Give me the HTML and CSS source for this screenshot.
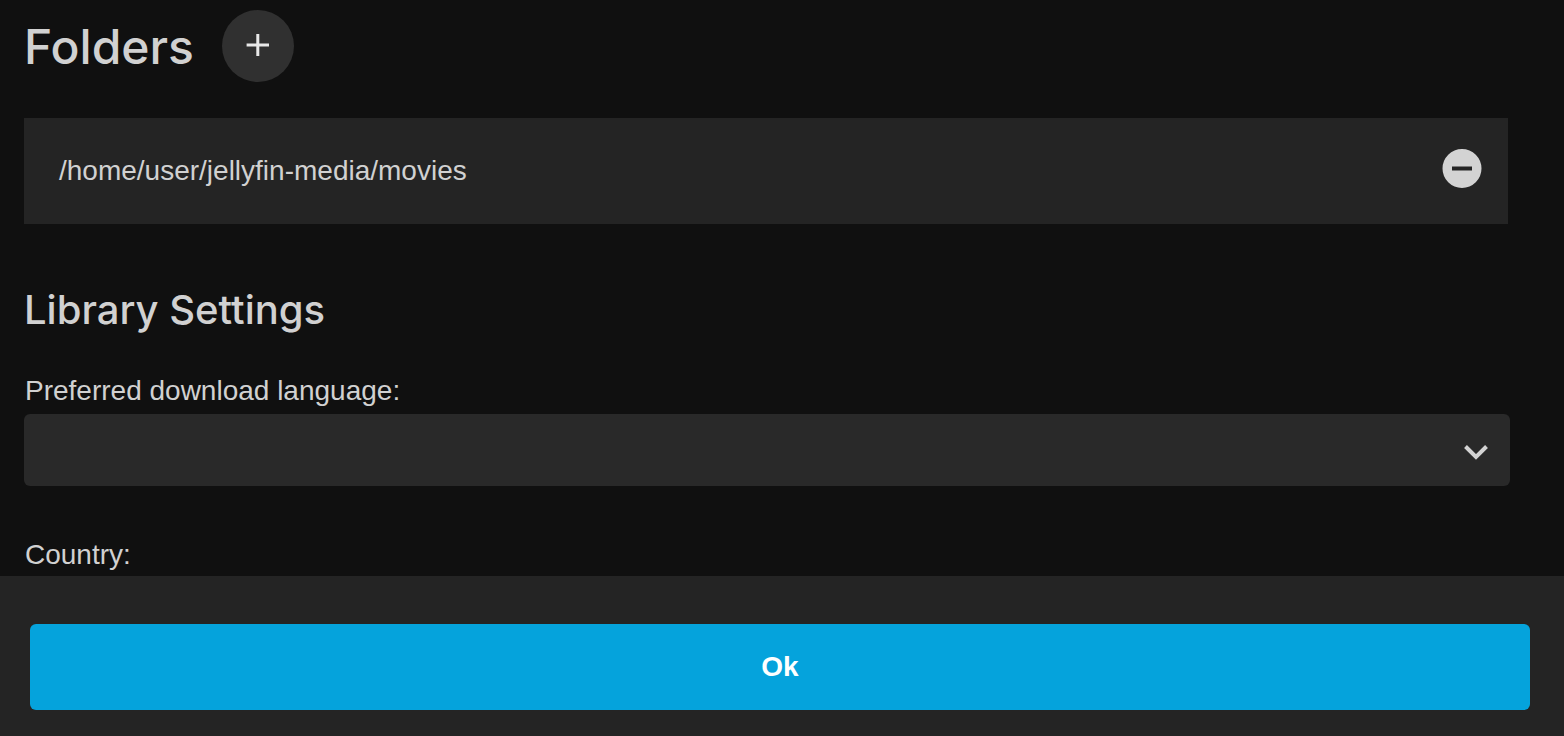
FILE: index.html
```html
<!DOCTYPE html>
<html lang="en">
<head>
<meta charset="utf-8">
<title>Library</title>
<link rel="stylesheet" href="styles.css">
</head>
<body>
<form class="dialog">
  <main class="content">
    <header class="folders-header">
      <h1 class="title">Folders</h1>
      <button class="add" type="button" aria-label="Add">
        <svg class="icon" viewBox="0 0 24 24" aria-hidden="true"><path d="M10.300 0h3v9.600H23v2.800h-9.700V22h-3v-9.600H.6V9.600h9.700z"/></svg>
      </button>
    </header>
    <div class="folder">
      <span class="path">/home/user/jellyfin-media/movies</span>
      <button class="remove" type="button" aria-label="Remove">
        <svg class="remove-icon" viewBox="0 0 48 48" aria-hidden="true"><path fill-rule="evenodd" d="M24 4a19.500 19.500 0 1 0 0 39 19.500 19.500 0 0 0 0-39zM14 21.500h20v4H14z"/></svg>
      </button>
    </div>
    <h2 class="subtitle">Library Settings</h2>
    <div class="field">
      <label class="label" for="language">Preferred download language:</label>
      <div class="select-wrap">
        <select class="select" id="language"><option></option></select>
        <svg class="chevron" viewBox="0 0 24 16" aria-hidden="true"><path d="M1.500 2.500 12 13 22.500 2.500"/></svg>
      </div>
    </div>
    <div class="field">
      <label class="label" for="country">Country:</label>
      <div class="select-wrap">
        <select class="select" id="country"><option></option></select>
      </div>
    </div>
  </main>
  <footer class="footer">
    <button class="submit" type="submit">Ok</button>
  </footer>
</form>
</body>
</html>
```
FILE: styles.css
```css
* {
  box-sizing: border-box;
}

body {
  margin: 0;
  background: #101010;
  color: #d1d1d1;
  font-family: "Liberation Sans", Arial, sans-serif;
  font-size: 28px;
  line-height: 32px;
}

button {
  padding: 0;
  border: 0;
  font: inherit;
  cursor: pointer;
}

.dialog {
  display: flex;
  flex-direction: column;
  height: 100vh;
}

.content {
  flex: 1;
  min-height: 0;
  overflow: hidden;
  padding: 10px 54px 0 24px;
}

.folders-header {
  display: flex;
  align-items: center;
  gap: 28px;
  margin-bottom: 36px;
}

.title,
.subtitle {
  margin: 0;
  font-family: Inter, "Open Sans", sans-serif;
  font-weight: 500;
}

.title {
  padding-top: 2px;
  font-size: 48px;
  line-height: 64px;
}

.subtitle {
  margin-bottom: 41px;
  font-size: 40px;
  line-height: 48px;
}

.add {
  display: grid;
  place-items: center;
  width: 72px;
  height: 72px;
  border-radius: 50%;
  background: #303030;
}

.icon {
  width: 24px;
  height: 24px;
  fill: #e8e8e8;
}

.folder {
  display: flex;
  align-items: center;
  justify-content: space-between;
  margin: 0 2px 62px 0;
  padding: 27px 22px 31px 35px;
  background: #242424;
}

.path {
  padding-top: 4px;
}

.remove {
  display: grid;
  background: none;
}

.remove-icon {
  width: 48px;
  height: 48px;
  fill: #d3d3d3;
}

.field {
  margin-bottom: 53px;
}

.label {
  display: block;
  margin-bottom: 7px;
  padding-left: 1px;
}

.select-wrap {
  position: relative;
}

.select {
  display: block;
  width: 100%;
  height: 72px;
  padding: 0 64px 0 16px;
  border: 0;
  border-radius: 6px;
  appearance: none;
  background: #292929;
  color: inherit;
  font: inherit;
}

.chevron {
  position: absolute;
  top: 30px;
  right: 22px;
  width: 24px;
  height: 16px;
  fill: none;
  stroke: #d3d3d3;
  stroke-width: 4;
  pointer-events: none;
}

.footer {
  padding: 48px 34px 26px 30px;
  background: #242424;
}

.submit {
  display: block;
  width: 100%;
  height: 86px;
  border-radius: 6px;
  background: #05a3dc;
  color: #fff;
  font-weight: 700;
}
```
